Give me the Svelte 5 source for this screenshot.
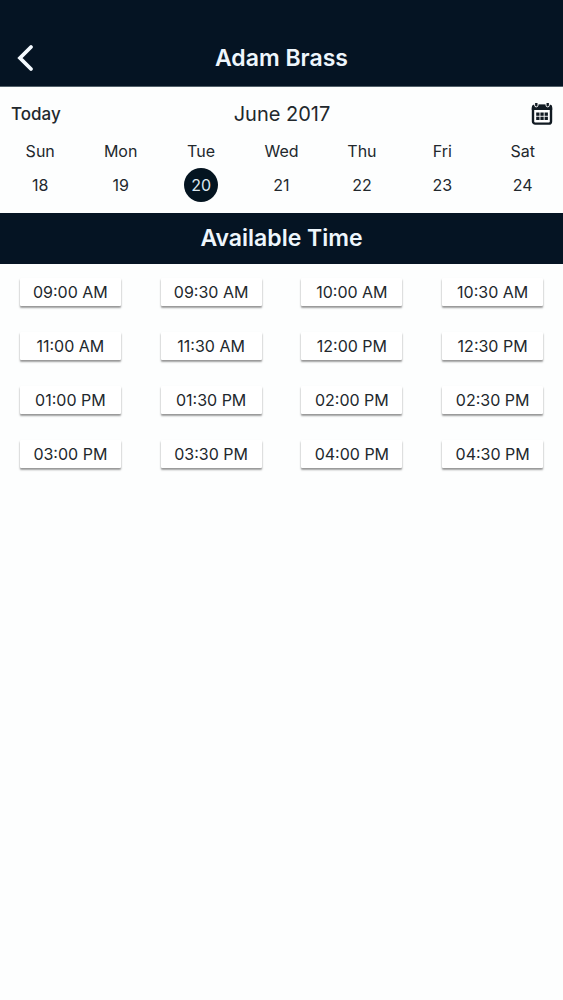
<script lang="ts">
  const week = [
    { name: 'Sun', date: 18 },
    { name: 'Mon', date: 19 },
    { name: 'Tue', date: 20 },
    { name: 'Wed', date: 21 },
    { name: 'Thu', date: 22 },
    { name: 'Fri', date: 23 },
    { name: 'Sat', date: 24 },
  ];

  const slots = [
    '09:00 AM', '09:30 AM', '10:00 AM', '10:30 AM',
    '11:00 AM', '11:30 AM', '12:00 PM', '12:30 PM',
    '01:00 PM', '01:30 PM', '02:00 PM', '02:30 PM',
    '03:00 PM', '03:30 PM', '04:00 PM', '04:30 PM',
  ];

  let selectedDate = $state(20);
  let selectedSlot = $state('');
</script>

<div class="screen">
  <header class="navbar">
    <button class="icon-button" aria-label="Back">
      <svg width="18" height="28" viewBox="0 0 18 28" fill="none" stroke="#f4faff" stroke-width="3.8">
        <path d="M15 3 4 14l11 11" stroke-linecap="round" />
      </svg>
    </button>
    <h1>Adam Brass</h1>
  </header>

  <section class="calendar">
    <div class="month-row">
      <button class="today" onclick={() => (selectedDate = 20)}>Today</button>
      <span class="month">June 2017</span>
      <button class="icon-button calendar-button" aria-label="Open calendar">
        <svg width="22" height="22" viewBox="0 0 22 22">
          <rect x="2" y="3" width="18" height="17.6" rx="2.2" fill="#fff" stroke="#111a22" stroke-width="2.4" />
          <path d="M.8 7V4.500a3 3 0 0 1 3-3h14.400a3 3 0 0 1 3 3V7z" fill="#111a22" />
          <path d="M3.600 0v2.200a1.700 1.700 0 0 0 3.400 0V0M15 0v2.200a1.700 1.700 0 0 0 3.400 0V0" fill="#111a22" stroke="#fff" stroke-width="1" />
          <g fill="#111a22">
            {#each [9.5, 13.7] as y}
              {#each [5.2, 9.4, 13.6] as x}
                <rect {x} {y} width="3.3" height="3.3" />
              {/each}
            {/each}
          </g>
        </svg>
      </button>
    </div>

    <div class="week">
      {#each week as day}
        <div class="day">
          <span class="day-name">{day.name}</span>
          <button
            class="date"
            class:selected={day.date === selectedDate}
            onclick={() => (selectedDate = day.date)}
          >
            {day.date}
          </button>
        </div>
      {/each}
    </div>
  </section>

  <h2>Available Time</h2>

  <div class="slots">
    {#each slots as slot}
      <button
        class="slot"
        aria-pressed={slot === selectedSlot}
        onclick={() => (selectedSlot = slot)}
      >
        {slot}
      </button>
    {/each}
  </div>
</div>

<style>
  :global(body) {
    margin: 0;
    background: #fdfefe;
  }

  .screen {
    font-family: Inter, 'Liberation Sans', sans-serif;
    color: #22282d;
  }

  button {
    padding: 0;
    border: 0;
    background: none;
    color: inherit;
    font: inherit;
    cursor: pointer;
  }

  .icon-button {
    display: flex;
  }

  .navbar {
    display: grid;
    grid-template-columns: 1fr auto 1fr;
    align-items: center;
    padding: 29px 16px 0;
    height: 57px;
    background: #051423;
    border-bottom: 1px solid #53616a;
  }

  h1,
  h2 {
    margin: 0;
    color: #eef6fc;
    font-size: 23px;
    font-weight: 600;
    text-align: center;
  }

  .calendar {
    padding-bottom: 11px;
  }

  .month-row {
    display: grid;
    grid-template-columns: 1fr auto 1fr;
    align-items: center;
    height: 54px;
    padding: 0 10px 0 11px;
  }

  .today {
    justify-self: start;
    font-size: 17px;
    font-weight: 500;
  }

  .month {
    font-size: 20px;
  }

  .calendar-button {
    justify-self: end;
  }

  .week {
    display: grid;
    grid-template-columns: repeat(7, 1fr);
  }

  .day {
    display: flex;
    flex-direction: column;
    align-items: center;
    gap: 7px;
  }

  .day-name {
    font-size: 16px;
    line-height: 20px;
  }

  .date {
    width: 34px;
    height: 34px;
    border-radius: 50%;
    font-size: 16px;
  }

  .date.selected {
    background: #041420;
    color: #dce8ef;
  }

  h2 {
    background: #051423;
    line-height: 51px;
  }

  .slots {
    display: grid;
    grid-template-columns: repeat(4, 1fr);
    justify-items: center;
    row-gap: 26px;
    padding: 14px 0;
  }

  .slot {
    width: 101px;
    height: 28px;
    border-radius: 1px;
    background: #fff;
    box-shadow: 0 2px 2px rgba(0, 0, 0, 0.35), 0 1px 2px rgba(0, 0, 0, 0.12);
    font-size: 16px;
  }
</style>
